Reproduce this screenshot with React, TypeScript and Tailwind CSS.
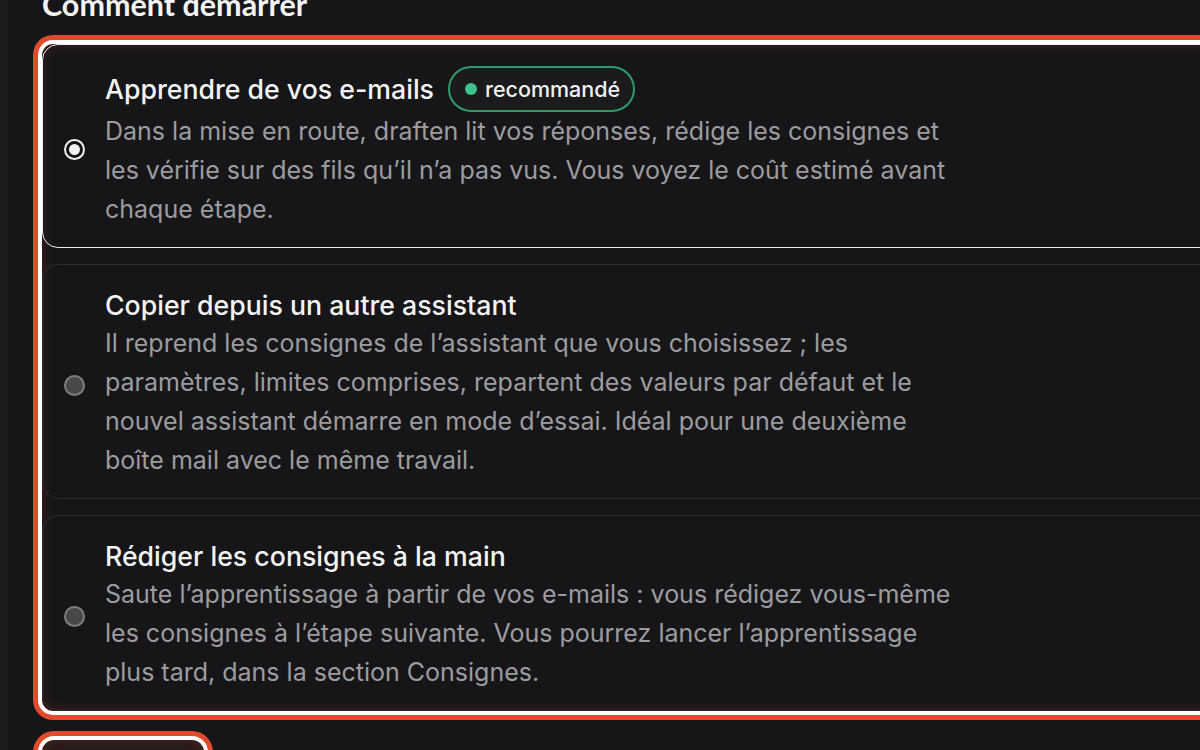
import { useState } from 'react'

type StartMode = 'learn' | 'copy' | 'manual'

interface Option {
  id: StartMode
  title: string
  description: string
  recommended?: boolean
}

const OPTIONS: Option[] = [
  {
    id: 'learn',
    title: 'Apprendre de vos e-mails',
    description:
      'Dans la mise en route, draften lit vos réponses, rédige les consignes et les vérifie sur des fils qu’il n’a pas vus. Vous voyez le coût estimé avant chaque étape.',
    recommended: true,
  },
  {
    id: 'copy',
    title: 'Copier depuis un autre assistant',
    description:
      'Il reprend les consignes de l’assistant que vous choisissez ; les paramètres, limites comprises, repartent des valeurs par défaut et le nouvel assistant démarre en mode d’essai. Idéal pour une deuxième boîte mail avec le même travail.',
  },
  {
    id: 'manual',
    title: 'Rédiger les consignes à la main',
    description:
      'Saute l’apprentissage à partir de vos e-mails : vous rédigez vous-même les consignes à l’étape suivante. Vous pourrez lancer l’apprentissage plus tard, dans la section Consignes.',
  },
]

// focus ring: white inner band + orange outer band, faint inner glow
const focusRing =
  'shadow-[0_0_0_4px_#ffffff,0_0_0_9px_#e24a2c,inset_0_0_14px_rgba(226,74,44,0.22)]'

function Radio({ checked }: { checked: boolean }) {
  if (checked) {
    return (
      <span className="mt-[4px] flex h-[21px] w-[21px] shrink-0 items-center justify-center rounded-full border-2 border-[#f2f2f2] bg-[#141416]">
        <span className="h-[11px] w-[11px] rounded-full bg-[#f2f2f2]" />
      </span>
    )
  }
  return (
    <span className="mt-[4px] h-[21px] w-[21px] shrink-0 rounded-full border-2 border-[#7e7e82] bg-[#48484b]" />
  )
}

export default function App() {
  const [mode, setMode] = useState<StartMode>('learn')

  return (
    <div className="flex h-[750px] w-[1200px] overflow-hidden bg-[#161618] font-['Inter',sans-serif]">
      <div className="w-[8px] shrink-0 bg-[#1c1c1f]" />
      <main className="flex flex-col pl-[34px]">
        {/* Section title */}
        <h2 className="-mt-[14px] font-['Lato',sans-serif] text-[30.5px] leading-[36px] font-bold text-[#f4f4f4]">
          Comment démarrer
        </h2>

        <div className={`mt-[22px] flex w-[1240px] flex-col gap-4 rounded-[11px] ${focusRing}`}>
          {OPTIONS.map((opt) => {
            const selected = mode === opt.id
            return (
              <button
                key={opt.id}
                type="button"
                onClick={() => setMode(opt.id)}
                className={`flex items-center gap-[20px] rounded-2xl border-[1.5px] pt-[21px] pr-6 pb-[18px] pl-[21px] text-left ${
                  selected ? 'border-[#ececec]' : 'border-[#2b2b2e]'
                }`}
              >
                <Radio checked={selected} />
                <div className="flex max-w-[852px] flex-col">
                  <div className="flex min-h-[38px] items-center gap-[14px]">
                    <span className="text-[26.7px] leading-[38px] font-medium text-[#f3f3f3]">
                      {opt.title}
                    </span>
                    {opt.recommended && (
                      <span className="flex h-[46px] items-center gap-[8px] rounded-full border-2 border-[#2e9b6c] bg-[#1b1b1e] pr-[13px] pl-[15px] text-[21.5px] font-medium text-[#f0f0f0]">
                        <span className="h-[12px] w-[12px] rounded-full bg-[#3ec48c]" />
                        recommandé
                      </span>
                    )}
                  </div>
                  <p className="text-[25px] leading-[39px] text-[#9c9ca0]">{opt.description}</p>
                </div>
              </button>
            )
          })}
        </div>

        {/* Next action, partly visible */}
        <button
          type="button"
          className={`mt-[29px] h-[60px] w-[162px] shrink-0 rounded-[12px] bg-[#241a1a] ${focusRing}`}
        />
      </main>
    </div>
  )
}
